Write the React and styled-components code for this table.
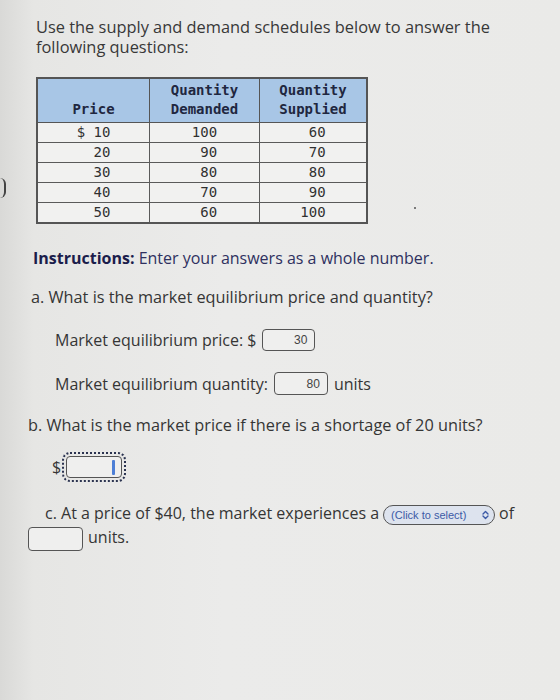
import React from "react";
import styled, { createGlobalStyle } from "styled-components";

const GlobalStyle = createGlobalStyle`
  html, body { margin: 0; padding: 0; }
  body {
    width: 560px;
    height: 700px;
    overflow: hidden;
    background: linear-gradient(90deg, #d9d9d7 0%, #e6e6e4 6%, #ebebea 40%, #eaeae8 100%);
    font-family: "Open Sans", "Liberation Sans", Arial, sans-serif;
    color: #363636;
  }
`;

const Page = styled.div`
  position: relative;
  width: 560px;
  height: 700px;
  box-sizing: border-box;
  padding-top: 17px;
`;

const Heading = styled.p`
  margin: 0 0 0 36px;
  max-width: 480px;
  font-size: 16.4px;
  line-height: 20px;
  color: #383838;
`;

const Table = styled.table`
  margin: 20px 0 0 36px;
  border-collapse: collapse;
  border: 2px solid #555;
  font-family: "DejaVu Sans Mono", "Liberation Mono", monospace;
  font-size: 14px;
`;

const Th = styled.th`
  width: ${(p) => p.$w}px;
  background: #a8c6e6;
  border: 1.5px solid #555;
  color: #1f2740;
  font-weight: bold;
  line-height: 19px;
  padding: 2px 0 3px;
  vertical-align: bottom;
`;

const Td = styled.td`
  background: #f1f1f0;
  border: 1.5px solid #5a5a5a;
  color: #303030;
  text-align: center;
  white-space: pre;
  height: 19px;
  line-height: 19px;
  padding: 0;
`;

const Instructions = styled.p`
  margin: 23px 0 0 33px;
  font-size: 16px;
  line-height: 22px;
  color: #2f3160;
  strong { color: #1b1d4b; font-weight: 700; }
`;

const Question = styled.p`
  margin: ${(p) => p.$top}px 0 0 ${(p) => p.$left || 31}px;
  font-size: 16.3px;
  line-height: 22px;
  color: #353535;
`;

const FieldRow = styled.div`
  display: flex;
  align-items: center;
  gap: ${(p) => p.$gap || 6}px;
  margin: ${(p) => p.$top}px 0 0 ${(p) => p.$left}px;
  height: ${(p) => p.$h}px;
  font-size: 16px;
  color: #353535;
`;

const AnswerBox = styled.span`
  display: inline-flex;
  justify-content: flex-end;
  align-items: center;
  box-sizing: border-box;
  width: ${(p) => p.$w}px;
  height: ${(p) => p.$h}px;
  padding-right: 7px;
  border: 1px solid #555;
  border-radius: 4px;
  background: #efefee;
  font-family: "Liberation Sans", Arial, sans-serif;
  font-size: 12px;
  color: #444;
  ${(p) => p.$focus && `outline: 2px dotted #2b3350; outline-offset: 2px;`}
`;

const Caret = styled.span`
  width: 3px;
  height: 15px;
  border-radius: 1px;
  background: #4d7fd6;
  margin-right: -1px;
`;

const WrapQuestion = styled.p`
  margin: 23px 0 0 28px;
  text-indent: 17px;
  font-size: 16px;
  line-height: 24px;
  color: #353535;
`;

const Pill = styled.span`
  display: inline-flex;
  align-items: center;
  justify-content: space-between;
  box-sizing: border-box;
  width: 112px;
  height: 20px;
  margin: 0 4px 0 4px;
  padding: 0 5px 0 7px;
  border: 1.5px solid #555;
  border-radius: 10px;
  background: #dde3ee;
  color: #3c5aa6;
  font-family: "Liberation Sans", Arial, sans-serif;
  font-size: 11px;
  text-indent: 0;
  vertical-align: middle;
`;

const BlankBox = styled.span`
  display: inline-block;
  box-sizing: border-box;
  width: 55px;
  height: 24px;
  margin-right: 5px;
  border: 1px solid #555;
  border-radius: 4px;
  background: #efefee;
  vertical-align: middle;
  text-indent: 0;
`;

const EdgeMark = styled.span`
  position: absolute;
  left: -8px;
  top: 178px;
  width: 12px;
  height: 20px;
  border-right: 2px solid #444;
  border-radius: 0 6px 6px 0;
`;

const Speck = styled.span`
  position: absolute;
  left: 414px;
  top: 207px;
  width: 2px;
  height: 2px;
  border-radius: 1px;
  background: #555;
`;

const rows = [
  ["$ 10", "100", " 60"],
  ["  20", " 90", " 70"],
  ["  30", " 80", " 80"],
  ["  40", " 70", " 90"],
  ["  50", " 60", "100"],
];

function Chevrons() {
  return (
    <svg width="7" height="10" viewBox="0 0 7 10" fill="none" stroke="#3c5aa6" strokeWidth="1.4" strokeLinecap="round" strokeLinejoin="round">
      <path d="M1 4 L3.5 1.5 L6 4" />
      <path d="M1 6 L3.5 8.5 L6 6" />
    </svg>
  );
}

export default function App() {
  return (
    <Page>
      <GlobalStyle />
      <EdgeMark />
      <Speck />
      <Heading>Use the supply and demand schedules below to answer the following questions:</Heading>
      <Table>
        <thead>
          <tr>
            <Th $w={111}>Price</Th>
            <Th $w={109}>Quantity<br />Demanded</Th>
            <Th $w={106}>Quantity<br />Supplied</Th>
          </tr>
        </thead>
        <tbody>
          {rows.map((r, i) => (
            <tr key={i}>
              {r.map((c, j) => (
                <Td key={j}>{c}</Td>
              ))}
            </tr>
          ))}
        </tbody>
      </Table>
      <Instructions>
        <strong>Instructions:</strong> Enter your answers as a whole number.
      </Instructions>
      <Question $top={17}>a. What is the market equilibrium price and quantity?</Question>
      <FieldRow $top={21} $left={55} $h={22}>
        <span>Market equilibrium price: $</span>
        <AnswerBox $w={53} $h={22}>30</AnswerBox>
      </FieldRow>
      <FieldRow $top={21} $left={55} $h={23}>
        <span>Market equilibrium quantity:</span>
        <AnswerBox $w={54} $h={23}>80</AnswerBox>
        <span>units</span>
      </FieldRow>
      <Question $top={19} $left={28}>b. What is the market price if there is a shortage of 20 units?</Question>
      <FieldRow $top={20} $left={52} $h={22} $gap={5}>
        <span>$</span>
        <AnswerBox $w={56} $h={22} $focus>
          <Caret />
        </AnswerBox>
      </FieldRow>
      <WrapQuestion>
        c. At a price of $40, the market experiences a
        <Pill>
          <span>(Click to select)</span>
          <Chevrons />
        </Pill>
        of <BlankBox />units.
      </WrapQuestion>
    </Page>
  );
}
